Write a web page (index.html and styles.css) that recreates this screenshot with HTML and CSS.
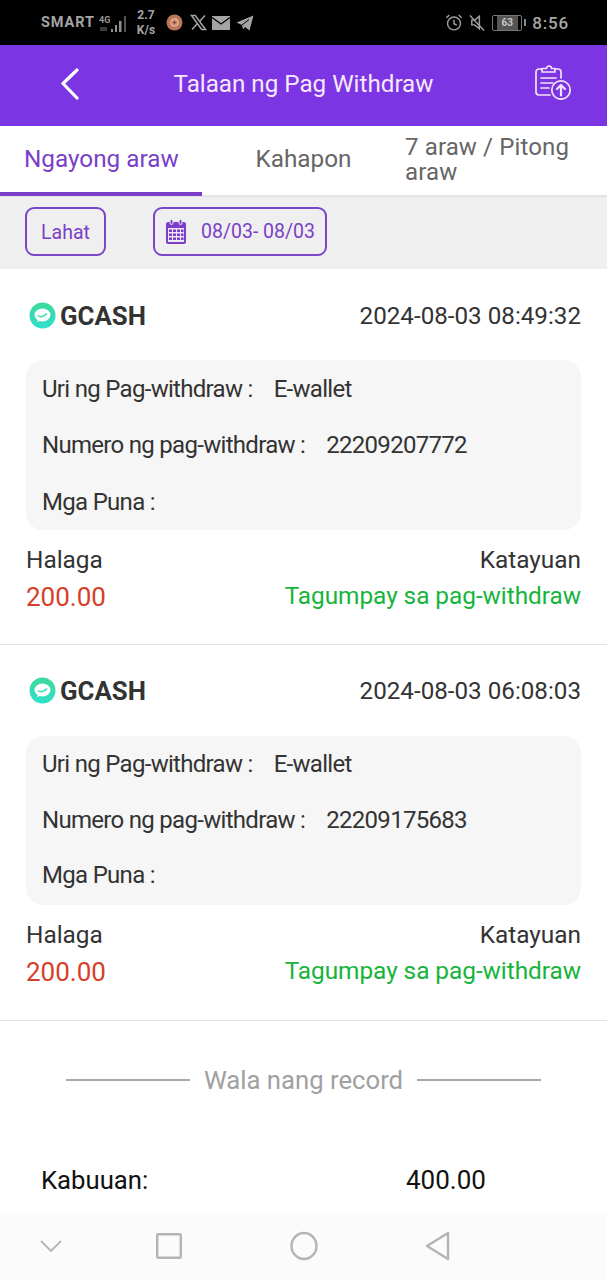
FILE: index.html
```html
<!DOCTYPE html>
<html lang="tl">
<head>
<meta charset="utf-8">
<title>Talaan ng Pag Withdraw</title>
<link rel="stylesheet" href="styles.css">
</head>
<body>
<div class="phone">
  <div class="status">
    <div class="status-left">
      <span class="carrier">SMART</span>
      <svg class="signal" width="30" height="20" viewBox="0 0 30 20"><text x="1" y="9" class="net">4G</text><g fill="#8f8f8f"><rect x="13" y="15" width="2" height="3"/><rect x="17" y="11" width="2" height="7"/><rect x="21" y="7" width="2.500" height="11"/></g><rect x="26" y="2" width="2" height="16" fill="#555"/><rect x="2" y="13" width="7" height="4" fill="#3a3a3a"/></svg>
      <span class="speed">2.7<br>K/s</span>
      <svg class="ic-badge" width="17" height="17" viewBox="0 0 17 17"><circle cx="8.500" cy="8.500" r="8" fill="#b9745a"/><circle cx="8.500" cy="8.500" r="4.500" fill="#d9a284"/><path d="M8.500 6.500v4M6.500 8.500h4" stroke="#8a4a36" stroke-width="1.300"/></svg>
      <svg class="ic-x" width="17" height="17" viewBox="0 0 17 17"><path d="M1.500 1.500h3.800l10.200 14h-3.800z" fill="none" stroke="#a4a4a4" stroke-width="1.500"/><path d="M15 1.500 9.500 7.500M7.500 9.500 2 15.500" stroke="#a4a4a4" stroke-width="1.500"/></svg>
      <svg class="ic-mail" width="18" height="14" viewBox="0 0 18 14"><rect width="18" height="14" fill="#a4a4a4"/><path d="M0 1.500 9 8l9-6.500" fill="none" stroke="#000" stroke-width="1.300"/></svg>
      <svg class="ic-send" width="18" height="16" viewBox="0 0 18 16"><path d="M17.500.500 13.500 15.500 9 12l-2 2.500-1-4.500L.500 7.500z" fill="#a4a4a4"/><path d="M6 10 13 4.500" stroke="#000"/></svg>
    </div>
    <div class="status-right">
      <svg width="18" height="19" viewBox="0 0 19 19" fill="none" stroke="#a0a0a0" stroke-width="1.500"><circle cx="9.500" cy="10.500" r="6.800"/><path d="M9.500 6.500v4.300l3 1.500M1.500 4.500l3-3M17.500 4.500l-3-3"/></svg>
      <svg width="18" height="19" viewBox="0 0 19 19" fill="none" stroke="#a0a0a0" stroke-width="1.500"><path d="M4 7h3l5-4v13l-5-4H4z"/><path d="M2 2l15 16"/></svg>
      <span class="battery"><span class="battery-level">63</span></span><span class="battery-tip"></span>
      <span class="clock">8:56</span>
    </div>
  </div>

  <header class="topbar">
    <svg class="back" width="22" height="32" viewBox="0 0 22 32" fill="none" stroke="#fff" stroke-width="3.200" stroke-linecap="round" stroke-linejoin="round"><path d="M18 2 4 15.500 18 30"/></svg>
    <h1 class="title">Talaan ng Pag Withdraw</h1>
    <svg class="upload" width="38" height="36" viewBox="0 0 38 36" fill="none" stroke="#f3e3fb" stroke-width="1.700" stroke-linecap="round" stroke-linejoin="round"><path d="M8 5H5a3 3 0 0 0-3 3v20a3 3 0 0 0 3 3h11"/><path d="M21 5h3a3 3 0 0 1 3 3v6"/><path d="M8 8V4.500h4.500a2.500 2.500 0 0 1 5 0H21V8z"/><path d="M7 14h15M7 19h12M7 24h8"/><circle cx="27" cy="26" r="9.200"/><path d="M27 31.500V21M23 25l4-4 4 4" stroke-width="2.200"/></svg>
  </header>

  <nav class="tabs">
    <div class="tab tab-active">Ngayong araw</div>
    <div class="tab tab-mid">Kahapon</div>
    <div class="tab tab-wrap">7 araw / Pitong araw</div>
  </nav>

  <div class="filters">
    <div class="chip chip-all">Lahat</div>
    <div class="chip chip-date">
      <svg width="24" height="25" viewBox="0 0 24 25"><path d="M2 5a2 2 0 0 1 2-2h16a2 2 0 0 1 2 2v18a2 2 0 0 1-2 2H4a2 2 0 0 1-2-2z" fill="#7a3fc8"/><rect x="4" y="9" width="16" height="14" fill="#efe8f8"/><g fill="#7a3fc8"><rect x="5" y="10.500" width="3" height="2.500"/><rect x="9" y="10.500" width="3" height="2.500"/><rect x="13" y="10.500" width="3" height="2.500"/><rect x="17" y="10.500" width="2.500" height="2.500"/><rect x="5" y="14.500" width="3" height="2.500"/><rect x="9" y="14.500" width="3" height="2.500"/><rect x="13" y="14.500" width="3" height="2.500"/><rect x="17" y="14.500" width="2.500" height="2.500"/><rect x="5" y="18.500" width="3" height="2.500"/><rect x="9" y="18.500" width="3" height="2.500"/><rect x="13" y="18.500" width="3" height="2.500"/><rect x="17" y="18.500" width="2.500" height="2.500"/></g><rect x="6" y="0.500" width="3" height="5" rx="1.500" fill="#7a3fc8" stroke="#efeaf6"/><rect x="15" y="0.500" width="3" height="5" rx="1.500" fill="#7a3fc8" stroke="#efeaf6"/></svg>
      <span>08/03- 08/03</span>
    </div>
  </div>

  <article class="record">
    <div class="record-head">
      <div class="brand">
        <svg class="gcash" width="27" height="27" viewBox="0 0 27 27"><defs><linearGradient id="gc1" x1="0" y1="0" x2="0" y2="1"><stop offset="0" stop-color="#3cd99a"/><stop offset="1" stop-color="#2fe0cc"/></linearGradient></defs><circle cx="13.500" cy="13.500" r="13" fill="url(#gc1)"/><ellipse cx="13.500" cy="13" rx="8" ry="6.500" fill="#fff"/><path d="M8 20l2-4 4 2z" fill="#fff"/><path d="M9 13.500c2 2 6 1.500 9-2" fill="none" stroke="#35dcb0" stroke-width="1.600"/></svg>
        <span>GCASH</span>
      </div>
      <time class="stamp">2024-08-03 08:49:32</time>
    </div>
    <div class="panel">
      <div class="row"><span class="label">Uri ng Pag-withdraw :</span><span>E-wallet</span></div>
      <div class="row"><span class="label">Numero ng pag-withdraw :</span><span>22209207772</span></div>
      <div class="row"><span class="label">Mga Puna :</span></div>
    </div>
    <div class="summary"><span>Halaga</span><span>Katayuan</span></div>
    <div class="summary summary-values"><span class="amount">200.00</span><span class="state">Tagumpay sa pag-withdraw</span></div>
  </article>

  <article class="record">
    <div class="record-head">
      <div class="brand">
        <svg class="gcash" width="27" height="27" viewBox="0 0 27 27"><defs><linearGradient id="gc2" x1="0" y1="0" x2="0" y2="1"><stop offset="0" stop-color="#3cd99a"/><stop offset="1" stop-color="#2fe0cc"/></linearGradient></defs><circle cx="13.500" cy="13.500" r="13" fill="url(#gc2)"/><ellipse cx="13.500" cy="13" rx="8" ry="6.500" fill="#fff"/><path d="M8 20l2-4 4 2z" fill="#fff"/><path d="M9 13.500c2 2 6 1.500 9-2" fill="none" stroke="#35dcb0" stroke-width="1.600"/></svg>
        <span>GCASH</span>
      </div>
      <time class="stamp">2024-08-03 06:08:03</time>
    </div>
    <div class="panel">
      <div class="row"><span class="label">Uri ng Pag-withdraw :</span><span>E-wallet</span></div>
      <div class="row"><span class="label">Numero ng pag-withdraw :</span><span>22209175683</span></div>
      <div class="row"><span class="label">Mga Puna :</span></div>
    </div>
    <div class="summary"><span>Halaga</span><span>Katayuan</span></div>
    <div class="summary summary-values"><span class="amount">200.00</span><span class="state">Tagumpay sa pag-withdraw</span></div>
  </article>

  <div class="end-note"><i></i><span>Wala nang record</span><i></i></div>

  <div class="total"><span class="total-label">Kabuuan:</span><span class="total-value">400.00</span></div>

  <div class="navbar">
    <svg width="24" height="14" viewBox="0 0 24 14" fill="none" stroke="#b4b4b4" stroke-width="1.800"><path d="M2 2l10 10L22 2"/></svg>
    <svg class="nav-square" width="26" height="26" viewBox="0 0 26 26" fill="none" stroke="#b4b4b4" stroke-width="2.400"><rect x="1.200" y="1.200" width="23.600" height="23.600" rx="1"/></svg>
    <svg class="nav-circle" width="28" height="30" viewBox="0 0 28 30" fill="none" stroke="#b4b4b4" stroke-width="2.400"><ellipse cx="14" cy="15" rx="12.500" ry="13"/></svg>
    <svg class="nav-back" width="26" height="30" viewBox="0 0 26 30" fill="none" stroke="#b4b4b4" stroke-width="2.400" stroke-linejoin="round"><path d="M23 2v26L2 15z"/></svg>
  </div>
</div>
</body>
</html>
```
FILE: styles.css
```css
* { box-sizing: border-box; }
html, body { margin: 0; padding: 0; }
body { background: #fff; font-family: Roboto, "Liberation Sans", sans-serif; color: #333; }
.phone { width: 607px; height: 1280px; overflow: hidden; display: flex; flex-direction: column; }

.status { height: 45px; background: #000; display: flex; justify-content: space-between; align-items: center; padding: 0 38px 0 41px; color: #a4a4a4; }
.status-left, .status-right { display: flex; align-items: center; }
.carrier { font-size: 14.500px; font-weight: 700; letter-spacing: .9px; }
.signal { margin-left: 3px; margin-top: 2px; }
.net { font-size: 9px; fill: #9a9a9a; font-weight: 700; }
.speed { font-size: 12px; line-height: 15px; font-weight: 700; margin-left: 9px; text-align: center; }
.ic-badge { margin-left: 11px; }
.ic-x { margin-left: 7px; }
.ic-mail { margin-left: 5px; }
.ic-send { margin-left: 6px; }
.status-right svg + svg { margin-left: 5px; }
.battery { margin-left: 6px; width: 30px; height: 16px; border: 1px solid #777; border-radius: 2px; display: flex; justify-content: center; align-items: center; }
.battery-level { width: 21px; text-align: center; background: #555; color: #c8c8c8; font-size: 10px; font-weight: 700; line-height: 14px; }
.battery-tip { width: 2px; height: 7px; background: #888; margin-left: 2px; }
.clock { font-size: 17px; font-weight: 500; letter-spacing: .8px; margin-left: 6px; color: #a8a8a8; }

.topbar { height: 81px; background: #7c35e3; display: flex; align-items: center; justify-content: space-between; padding: 0 35px 0 59px; color: #f5e6fb; }
.title { margin: 0 8px 3px 0; font-size: 24.200px; font-weight: 400; color: #f6e8fc; }
.upload { margin-bottom: 7px; }
.back { margin-bottom: 3px; }

.tabs { height: 71px; border-bottom: 2px solid #e4e4e4; display: flex; align-items: center; color: #666; font-size: 24.300px; }
.tab { height: 71px; display: flex; align-items: center; }
.tab-active { width: 202px; padding: 0 0 0 24px; color: #7a3fc8; border-bottom: 4px solid #7a3fc8; }
.tab-mid { width: 203px; justify-content: center; padding-bottom: 4px; }
.tab-wrap { flex: 1; padding: 0 20px 2px 0; line-height: 25px; font-size: 24px; letter-spacing: .13px; }

.filters { height: 72px; background: #efefef; display: flex; align-items: flex-start; gap: 47px; padding: 10px 0 0 25px; color: #7a3fc8; font-size: 19.500px; }
.chip { height: 49px; border: 2px solid #7a46c6; border-radius: 9px; display: flex; align-items: center; }
.chip-all { width: 81px; justify-content: center; padding-top: 2px; }
.chip-date { width: 174px; padding-left: 9px; gap: 13px; }

.record { height: 376px; border-bottom: 1px solid #e3e3e3; padding: 0 26px; }
.record-head { height: 91px; display: flex; justify-content: space-between; align-items: center; padding-left: 3px; }
.record:first-of-type .record-head { padding-top: 2px; }
.brand { display: flex; align-items: center; gap: 4px; font-size: 25.800px; font-weight: 700; color: #333; }
.stamp { font-size: 24.200px; color: #333; }
.panel { height: 170px; background: #f6f6f6; border-radius: 17px; padding: 0 16px; display: flex; flex-direction: column; justify-content: center; font-size: 24px; letter-spacing: -.7px; color: #333; }
.record + .record .panel { height: 169px; padding-bottom: 2px; }
.row { height: 56.500px; display: flex; align-items: center; gap: 21px; }
.summary { display: flex; justify-content: space-between; font-size: 24.400px; color: #333; height: 38px; align-items: center; margin-top: 10px; }
.summary-values { margin-top: 0; }
.amount { color: #d6402b; font-size: 26px; }
.state { color: #16b43a; font-size: 24.400px; letter-spacing: -.05px; margin-bottom: 3px; }

.end-note { height: 120px; display: flex; align-items: center; justify-content: center; gap: 14px; color: #a0a0a0; font-size: 25.700px; padding-bottom: 2px; }
.end-note i { width: 124px; height: 2px; background: #a8a8a8; display: block; }

.total { height: 71px; display: flex; align-items: center; padding: 7px 0 0 41px; color: #111; font-size: 25.700px; }
.total-label { width: 365px; }
.total-value { font-size: 26px; }

.navbar { flex: 1; background: #fbfbfb; display: flex; align-items: center; padding: 0 0 0 39px; }
.nav-square { margin-left: 93px; }
.nav-circle { margin-left: 108px; }
.nav-back { margin-left: 107px; }
```
